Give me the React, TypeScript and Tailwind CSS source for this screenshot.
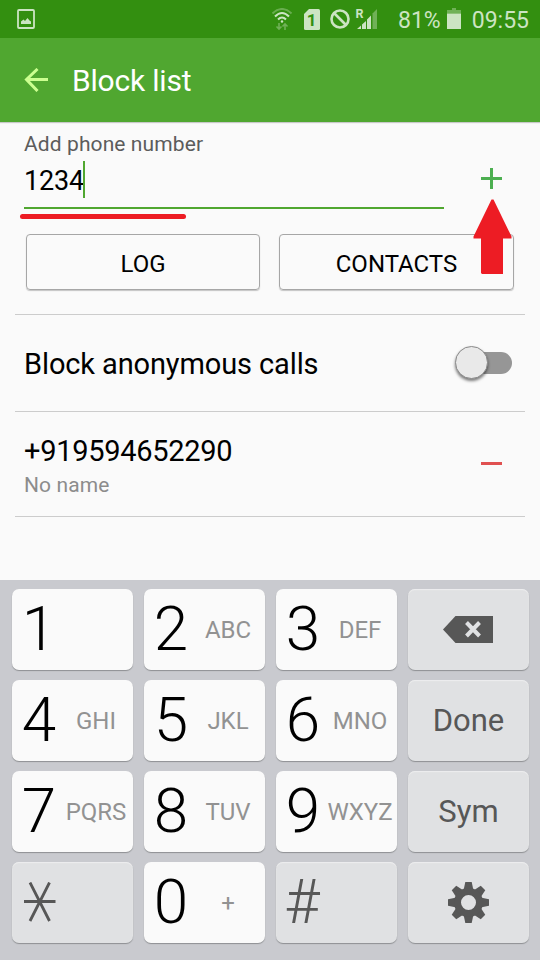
import { ReactNode, useState } from "react"

interface PadKey {
    id: string
    digit?: string
    letters?: string
    label?: string
    icon?: ReactNode
    grey?: boolean
}

const BackspaceIcon = () => (
    <svg width="50" height="27" viewBox="0 0 50 27" className="-ml-px">
        <path d="M0 13.5L12.5 0H50V27H12.5Z" fill="#575757" />
        <path d="M23.5 6.5L36.5 20M36.5 6.5L23.5 20" stroke="#e0e1e3" strokeWidth="4" />
    </svg>
)

const GearIcon = () => (
    <svg width="41" height="41" viewBox="-20.5 -20.5 41 41">
        {[0, 45, 90, 135, 180, 225, 270, 315].map((angle) => (
            <path
                key={angle}
                d="M-5 -12L-3.2 -20.5H3.2L5 -12Z"
                transform={`rotate(${angle})`}
                fill="#575757"
            />
        ))}
        <circle r="11" fill="none" stroke="#575757" strokeWidth="7" />
    </svg>
)

const StarIcon = () => (
    <svg width="32" height="40" viewBox="0 0 32 40" className="-mt-0.5 ml-3">
        <path d="M0 19.5H31.500M6 0.5L25.500 39M25.500 0.5L6 39" stroke="#575757" strokeWidth="2.8" />
    </svg>
)

const keys: PadKey[] = [
    { id: "1", digit: "1" },
    { id: "2", digit: "2", letters: "ABC" },
    { id: "3", digit: "3", letters: "DEF" },
    { id: "back", icon: <BackspaceIcon />, grey: true },
    { id: "4", digit: "4", letters: "GHI" },
    { id: "5", digit: "5", letters: "JKL" },
    { id: "6", digit: "6", letters: "MNO" },
    { id: "done", label: "Done", grey: true },
    { id: "7", digit: "7", letters: "PQRS" },
    { id: "8", digit: "8", letters: "TUV" },
    { id: "9", digit: "9", letters: "WXYZ" },
    { id: "sym", label: "Sym", grey: true },
    { id: "star", icon: <StarIcon />, grey: true },
    { id: "0", digit: "0", letters: "+" },
    { id: "#", digit: "#", grey: true },
    { id: "settings", icon: <GearIcon />, grey: true },
]

function StatusBar() {
    return (
        <div className="flex h-[38px] items-center bg-[#338f10] pl-[17px] pr-[11px] text-[#cce4c3]">
            <svg width="18" height="20" viewBox="0 0 18 20">
                <rect x="1" y="1" width="16" height="18" rx="1" fill="none" stroke="currentColor" strokeWidth="1.8" />
                <path d="M4 15V12.5L6.5 10.5L8 12L10.5 9L12.5 11.5L14 12.5V15Z" fill="currentColor" />
            </svg>
            <svg width="20" height="23" viewBox="0 0 20 23" className="ml-[237px]" fill="none" stroke="currentColor">
                <path d="M0.5 5.5Q10 -3.500 19.5 5.5" strokeWidth="2" opacity="0.35" />
                <path d="M3 8.500Q10 1.500 17 8.500" strokeWidth="2" />
                <path d="M6 11.500Q10 7.500 14 11.500" strokeWidth="2" />
                <circle cx="10" cy="13.500" r="1.200" fill="currentColor" stroke="none" />
                <path d="M7 15V21M4.500 18.500L7 21L9.500 18.500M13 22V16M10.500 18.500L13 16L15.500 18.500" strokeWidth="1.6" opacity="0.4" />
            </svg>
            <svg width="16" height="21" viewBox="0 0 16 21" className="ml-3">
                <path d="M5 0H14.500Q16 0 16 1.500V19.500Q16 21 14.500 21H1.500Q0 21 0 19.500V5Z" fill="currentColor" />
                <text x="7.700" y="16.500" textAnchor="middle" className="fill-[#338f10] font-[Roboto] text-[17px] font-bold">1</text>
            </svg>
            <svg width="20" height="20" viewBox="0 0 20 20" className="-mt-px ml-2.5" fill="none" stroke="currentColor" strokeWidth="2.6">
                <circle cx="10" cy="10" r="8.500" />
                <path d="M4 4L16 16" />
            </svg>
            <svg width="23" height="30" viewBox="0 -4 23 30" className="ml-[5px]">
                <text x="0.500" y="10" className="fill-current font-[Roboto] text-[12.5px] font-bold">R</text>
                <path d="M2 21L6 17.500V21ZM7 16.500L11 13V21H7ZM12 11.500L16 7.500V21H12Z" fill="currentColor" />
                <path d="M17.500 5.500L22 1V21H17.500Z" fill="currentColor" opacity="0.4" />
            </svg>
            <span className="ml-[20px] mt-[2px] text-[23px] leading-none">81%</span>
            <svg width="14" height="21" viewBox="0 0 14 21" className="-mt-px ml-1.5">
                <path d="M5 0H9V2H14V5.500H0V2H5Z" fill="currentColor" opacity="0.4" />
                <path d="M0 5.500H14V21H0Z" fill="currentColor" />
            </svg>
            <span className="ml-auto mt-[2px] text-[23px] leading-none">09:55</span>
        </div>
    )
}

function Keypad() {
    return (
        <div className="grid h-[380px] grid-cols-[repeat(4,121px)] grid-rows-[repeat(4,81px)] gap-x-[11px] gap-y-[10px] bg-[#c9cacf] pl-3 pt-[9px]">
            {keys.map((key) => (
                <button
                    key={key.id}
                    className={`flex items-center rounded-[7px] whitespace-nowrap ${
                        key.grey
                            ? "bg-[#e0e1e3] text-[#575757] shadow-[0_1px_1px_#8e9093,inset_0_1px_1px_#eeeeef]"
                            : "bg-[#fafafa] text-black shadow-[0_1px_1px_#8e9093]"
                    } ${key.digit || key.id === "star" ? "" : "justify-center"}`}
                >
                    {key.icon}
                    {key.label && <span className="text-[31px] leading-none">{key.label}</span>}
                    {key.digit && (
                        <span
                            className={`text-center leading-none font-light ${
                                key.digit === "#" ? "w-[52px] text-[61px]" : "-mt-0.5 w-[54px] text-[62px]"
                            }`}
                        >
                            {key.digit}
                        </span>
                    )}
                    {key.letters && (
                        <span className="flex w-[60px] justify-center text-2xl leading-none text-[#929292]">
                            {key.letters}
                        </span>
                    )}
                </button>
            ))}
        </div>
    )
}

export default function App() {
    const [blocked, setBlocked] = useState(false)

    return (
        <div className="relative flex h-[960px] w-[540px] flex-col overflow-hidden bg-[#fafafa] font-[Roboto,sans-serif] text-black">
            <StatusBar />
            <header className="flex h-[84px] items-center bg-[#50a730] pl-6 text-white shadow-[0_1px_1px_#c8c8c8]">
                <svg width="24" height="24" viewBox="0 0 24 24" fill="none" stroke="#ccff90" strokeWidth="3">
                    <path d="M24 11.500H2M13.500 1L2.500 11.500L13.500 23" />
                </svg>
                <h1 className="mt-0.5 ml-6 text-[30px] leading-none tracking-[-0.2px]">Block list</h1>
            </header>

            <main className="flex-1 px-[15px]">
                <section className="h-[193px] border-b border-[#cccccc] pt-3">
                    <div className="flex pl-[9px]">
                        <div className="w-[420px] border-b-2 border-[#50a730] pb-[9px]">
                            <p className="text-[21px] leading-5 tracking-[0.1px] text-[#5c5c5c]">Add phone number</p>
                            <div className="mt-[7px] flex h-[37px] items-center text-[27px]">
                                <span className="mt-[3px] w-[59px] tracking-[-0.2px]">1234</span>
                                <span className="h-[37px] w-0.5 bg-[#50a730]" />
                            </div>
                        </div>
                        <svg width="21" height="21" viewBox="0 0 21 21" className="ml-[37px] mt-[34px]">
                            <path d="M0 10.500H21M10.500 0V21" stroke="#4caf50" strokeWidth="3" />
                        </svg>
                    </div>
                    <div className="mt-[25px] flex gap-[19px] pl-[11px]">
                        <button className="h-14 w-[234px] rounded border border-[#a6a6a6] pt-1 text-2xl shadow-[0_1px_1px_#c4c4c4]">
                            LOG
                        </button>
                        <button className="h-14 w-[235px] rounded border border-[#a6a6a6] pt-1 text-2xl shadow-[0_1px_1px_#c4c4c4]">
                            CONTACTS
                        </button>
                    </div>
                </section>

                <section className="flex h-[97px] items-center justify-between border-b border-[#cccccc] pl-[9px] pr-[13px]">
                    <h2 className="mt-[3px] text-[29px] leading-none tracking-[-0.12px]">Block anonymous calls</h2>
                    <button
                        aria-pressed={blocked}
                        onClick={() => setBlocked(!blocked)}
                        className="flex h-[22px] w-[56px] items-center rounded-full bg-[#969696]"
                    >
                        <span className="-mt-px -ml-px h-[33px] w-[33px] shrink-0 rounded-full border border-[#8a8a8a] bg-[#e9e9e9] shadow-[0_2px_3px_rgba(0,0,0,0.5)]" />
                    </button>
                </section>

                <section className="flex h-[105px] items-center justify-between border-b border-[#cccccc] pl-[9px] pr-[23px]">
                    <div>
                        <p className="mt-2 text-[29px] leading-[34px] tracking-[-0.3px]">+919594652290</p>
                        <p className="text-[21px] leading-[34px] tracking-[0.1px] text-[#8c8c8c]">No name</p>
                    </div>
                    <span className="-mt-0.5 h-[3px] w-[21px] bg-[#e05050]" />
                </section>
            </main>

            <Keypad />

            <div className="absolute top-[214px] left-5 h-[5px] w-[166px] rounded-full bg-[#ed1c24]" />
            <svg width="40" height="76" viewBox="0 0 40 76" className="absolute top-[199px] left-[473px]">
                <path
                    d="M18.500 0.500H20.500L38.500 37.500V39.500H30V75H9L8 74V39.500H0.500V37.500Z"
                    fill="#ed1c24"
                />
            </svg>
        </div>
    )
}
